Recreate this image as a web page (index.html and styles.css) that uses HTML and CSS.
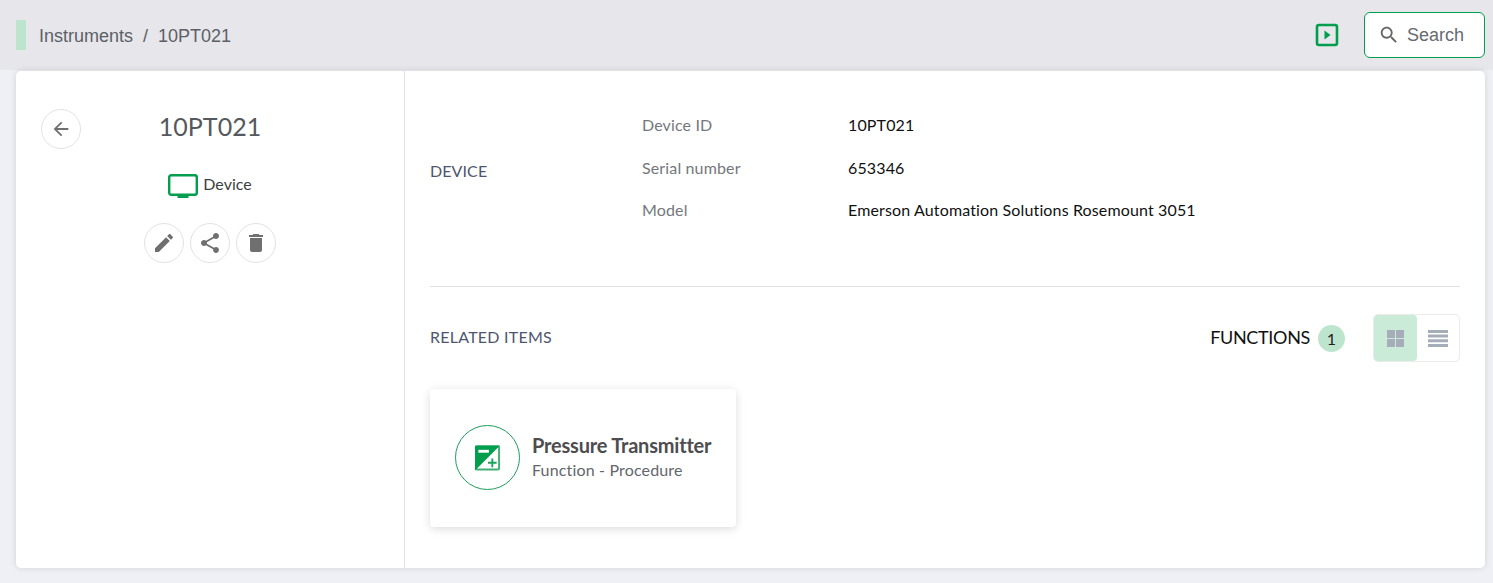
FILE: index.html
```html
<!DOCTYPE html>
<html lang="en">
<head>
<meta charset="utf-8">
<title>10PT021</title>
<link rel="stylesheet" href="styles.css">
</head>
<body>
<header class="topbar">
  <span class="marker"></span>
  <nav class="crumbs"><span>Instruments</span><span class="sep">/</span><span>10PT021</span></nav>
  <svg class="play" viewBox="0 0 24 24"><rect x="2" y="2" width="20" height="20" rx="2" fill="none" stroke="#009e4d" stroke-width="2.6"/><path d="M9.5 7.5v9l6-4.5z" fill="#009e4d"/></svg>
  <button class="search"><svg viewBox="0 0 24 24"><path d="M15.5 14h-.79l-.28-.27C15.41 12.59 16 11.11 16 9.5 16 5.91 13.09 3 9.5 3S3 5.91 3 9.5 5.91 16 9.5 16c1.61 0 3.09-.59 4.23-1.57l.27.28v.79l5 4.99L20.49 19l-4.99-5zm-6 0C7.01 14 5 11.99 5 9.5S7.01 5 9.5 5 14 7.01 14 9.5 11.99 14 9.5 14z"/></svg><span class="search-label">Search</span></button>
</header>
<main class="card">
  <aside class="side">
    <div class="title-row">
      <button class="round back"><svg viewBox="0 0 24 24"><path d="M20 11H7.83l5.59-5.59L12 4l-8 8 8 8 1.41-1.41L7.83 13H20v-2z"/></svg></button>
      <h1>10PT021</h1>
    </div>
    <div class="type">
      <svg viewBox="0 0 30 25"><rect x="1.2" y="1.2" width="27.6" height="19.6" rx="2" fill="none" stroke="#009e4d" stroke-width="2.4"/><rect x="9.5" y="21" width="11" height="3" fill="#009e4d"/></svg>
      <span class="type-label">Device</span>
    </div>
    <div class="actions">
      <button class="round"><svg viewBox="0 0 24 24"><path d="M3 17.25V21h3.75L17.81 9.94l-3.75-3.75L3 17.25zM20.71 7.04c.39-.39.39-1.02 0-1.41l-2.34-2.34c-.39-.39-1.02-.39-1.41 0l-1.83 1.83 3.75 3.75 1.83-1.83z"/></svg></button>
      <button class="round"><svg viewBox="0 0 24 24"><path d="M18 16.08c-.76 0-1.44.3-1.96.77L8.91 12.7c.05-.23.09-.46.09-.7s-.04-.47-.09-.7l7.05-4.11c.54.5 1.25.81 2.04.81 1.66 0 3-1.34 3-3s-1.34-3-3-3-3 1.34-3 3c0 .24.04.47.09.7L8.04 9.81C7.5 9.31 6.79 9 6 9c-1.66 0-3 1.34-3 3s1.34 3 3 3c.79 0 1.5-.31 2.04-.81l7.12 4.16c-.05.21-.08.43-.08.65 0 1.61 1.31 2.92 2.92 2.92 1.61 0 2.92-1.31 2.92-2.92s-1.31-2.92-2.92-2.92z"/></svg></button>
      <button class="round"><svg viewBox="0 0 24 24"><path d="M6 19c0 1.1.9 2 2 2h8c1.1 0 2-.9 2-2V7H6v12zM19 4h-3.5l-1-1h-5l-1 1H5v2h14V4z"/></svg></button>
    </div>
  </aside>
  <section class="content">
    <div class="device">
      <h2 class="section-label">DEVICE</h2>
      <dl class="fields">
        <dt>Device ID</dt><dd>10PT021</dd>
        <dt>Serial number</dt><dd>653346</dd>
        <dt>Model</dt><dd>Emerson Automation Solutions Rosemount 3051</dd>
      </dl>
    </div>
    <div class="related-head">
      <h2 class="section-label">RELATED ITEMS</h2>
      <div class="tools">
        <span class="fn">FUNCTIONS</span>
        <span class="count">1</span>
        <div class="toggle">
          <span class="tg active"><svg viewBox="0 0 17 17"><path d="M0 0h8v8H0zM9 0h8v8H9zM0 9h8v8H0zM9 9h8v8H9z"/></svg></span>
          <span class="tg"><svg viewBox="0 0 20 17"><path d="M0 0h20v3H0zM0 4.6h20v3H0zM0 9.3h20v3H0zM0 14h20v3H0z"/></svg></span>
        </div>
      </div>
    </div>
    <article class="item">
      <span class="item-icon"><svg viewBox="0 0 26 26"><rect x="1" y="1" width="24" height="24" rx="1" fill="#fff" stroke="#3fb273" stroke-width="2"/><path d="M1 0H26L0 26V1A1 1 0 0 1 1 0z" fill="#009e4d"/><path d="M3.5 4.5h11v3h-11z" fill="#fff"/><path d="M13.5 17h3.5v-3.5h2V17h3.5v2H19v3.5h-2V19h-3.5z" fill="#1aa55e"/></svg></span>
      <div class="item-text">
        <h3>Pressure Transmitter</h3>
        <p>Function - Procedure</p>
      </div>
    </article>
  </section>
</main>
</body>
</html>
```
FILE: styles.css
```css
* { box-sizing: border-box; }
html, body { height: 100%; }
body {
  margin: 0;
  background: #eff0f5;
  font-family: "Lato", sans-serif;
  overflow: hidden;
}
button { font: inherit; cursor: pointer; }

.topbar {
  height: 70px;
  background: #e6e6eb;
  display: flex;
  align-items: center;
  padding: 0 8px 0 16px;
}
.marker { width: 10px; height: 30px; background: #bde5ce; }
.crumbs {
  flex: 1;
  margin-left: 13px;
  padding-top: 2px;
  font: 18px "Liberation Sans", sans-serif;
  color: #5c6066;
  display: flex;
  gap: 10px;
}
.play { width: 24px; height: 24px; margin-right: 25px; }
.search {
  width: 121px;
  height: 46px;
  background: #fff;
  border: 1px solid #009e4d;
  border-radius: 6px;
  font: 18px "Liberation Sans", sans-serif;
  color: #666a70;
  display: flex;
  align-items: center;
  gap: 7px;
  padding: 0 0 0 13px;
}
.search svg { width: 22px; height: 22px; fill: #666; }
.search-label { padding-top: 1px; }

.card {
  margin: 1px 8px 0 16px;
  height: 497px;
  background: #fff;
  border-radius: 5px;
  box-shadow: 0 0 6px rgba(0, 0, 0, .12);
  display: flex;
}
.side {
  width: 389px;
  flex: none;
  border-right: 1px solid #dfe0e3;
  padding-top: 38px;
  display: flex;
  flex-direction: column;
  align-items: center;
}
.title-row { position: relative; width: 100%; height: 40px; display: flex; justify-content: center; align-items: center; }
.title-row h1 { margin: 0 0 6px; font-size: 25px; font-weight: 400; color: #55585c; }
.round {
  width: 40px;
  height: 40px;
  padding: 0;
  border: 1px solid #e2e2e2;
  border-radius: 50%;
  background: #fff;
  display: flex;
  align-items: center;
  justify-content: center;
}
.round svg { width: 24px; height: 24px; fill: #6f6f6f; }
.back { position: absolute; left: 25px; top: 0; }
.back svg { width: 22px; height: 22px; }
.type {
  margin-top: 23px;
  height: 28px;
  display: flex;
  align-items: center;
  gap: 5px;
  font-size: 16px;
  color: #3c3f42;
}
.type svg { width: 30px; height: 25px; }
.type-label { padding-bottom: 5px; }
.actions { margin-top: 23px; display: flex; gap: 6px; }

.content { flex: 1; padding: 0 25px; min-width: 0; }
.device {
  height: 216px;
  border-bottom: 1px solid #dfe0e3;
  display: flex;
}
.section-label {
  margin: 0;
  font-size: 16px;
  font-weight: 400;
  color: #50556e;
  letter-spacing: .1px;
}
.device .section-label { width: 212px; padding-top: 90px; }
.fields {
  margin: 42px 0 0;
  display: grid;
  grid-template-columns: 206px 1fr;
  grid-auto-rows: 42.5px;
  font-size: 16px;
  line-height: 24px;
  letter-spacing: .14px;
  align-content: start;
}
.fields dt { color: #74777c; }
.fields dd { margin: 0; color: #111; }
.related-head {
  margin-top: 27px;
  height: 48px;
  display: flex;
  align-items: center;
  justify-content: space-between;
}
.related-head .section-label { padding-bottom: 4px; letter-spacing: .24px; }
.tools { display: flex; align-items: center; }
.fn { font-size: 18px; color: #111; letter-spacing: -.33px; padding-bottom: 2px; }
.count {
  width: 27px;
  height: 27px;
  margin-left: 8px;
  border-radius: 50%;
  background: #bde5ce;
  color: #222;
  font-size: 16px;
  display: flex;
  align-items: center;
  justify-content: center;
}
.toggle {
  margin-left: 28px;
  width: 87px;
  height: 48px;
  border: 1px solid #ebebeb;
  border-radius: 5px;
  display: flex;
}
.tg { flex: 1; display: flex; align-items: center; justify-content: center; }
.tg svg { width: 20px; height: 17px; fill: #a5adb9; }
.tg.active { flex: none; width: 43px; background: #cbebd9; border-radius: 4px; }
.tg.active svg { width: 17px; }
.item {
  margin-top: 27px;
  width: 306px;
  height: 138px;
  border-radius: 4px;
  box-shadow: 0 2px 10px rgba(0, 0, 0, .14);
  display: flex;
  align-items: center;
  padding-left: 25px;
}
.item-icon {
  width: 65px;
  height: 65px;
  flex: none;
  margin-top: -1px;
  border: 1px solid #1d9e5a;
  border-radius: 50%;
  display: flex;
  align-items: center;
  justify-content: center;
}
.item-icon svg { width: 25px; height: 26px; }
.item-text { margin: 0 0 2px 12px; }
.item-text h3 { margin: 0; font-size: 20px; font-weight: 700; line-height: 24px; color: #4d4d4f; white-space: nowrap; letter-spacing: -.2px; }
.item-text p { margin: 1px 0 0; font-size: 16px; line-height: 24px; color: #63666b; white-space: nowrap; letter-spacing: .16px; }
```
